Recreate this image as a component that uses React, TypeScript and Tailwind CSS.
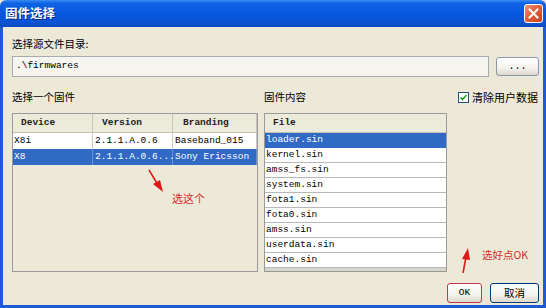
import React from "react";

const cjk = { fontFamily: '"Noto Sans CJK SC", "Noto Sans", sans-serif' };
const mono = { fontFamily: '"Liberation Mono", "DejaVu Sans Mono", monospace' };

const devices = [
  { d: "X8i", v: "2.1.1.A.0.6", b: "Baseband_015", sel: false },
  { d: "X8", v: "2.1.1.A.0.6...", b: "Sony Ericsson", sel: true },
];

const files = [
  "loader.sin",
  "kernel.sin",
  "amss_fs.sin",
  "system.sin",
  "fota1.sin",
  "fota0.sin",
  "amss.sin",
  "userdata.sin",
  "cache.sin",
];

function XpButton({ children, className = "" }: { children: React.ReactNode; className?: string }) {
  return (
    <div
      className={
        "flex items-center justify-center rounded-[3px] border border-[#003c74] bg-[linear-gradient(to_bottom,#ffffff_0%,#f3f2ec_60%,#dcd8cc_100%)] text-[10.5px] text-black " +
        className
      }
    >
      {children}
    </div>
  );
}

export default function App() {
  return (
    <div className="relative flex h-[308px] w-[546px] flex-col overflow-hidden bg-[#ece9d8]">
      {/* Title bar */}
      <div className="flex h-[27px] shrink-0 items-center justify-between rounded-t-[6px] bg-[linear-gradient(to_bottom,#3b8cf5_0%,#0f63e4_12%,#0756dc_55%,#0a52d2_85%,#0a48c0_100%)] pl-[5px] pr-[3px]">
        <span
          className="text-[12.5px] font-bold leading-none text-white [text-shadow:1px_1px_0_#0a2a80]"
          style={cjk}
        >
          固件选择
        </span>
        <div className="flex h-[19px] w-[19px] items-center justify-center rounded-[3px] border border-white bg-[linear-gradient(135deg,#f0967a_0%,#e0603a_45%,#c8401c_100%)]">
          <svg width="11" height="11" viewBox="0 0 11 11">
            <path d="M1.5 1.5 L9.5 9.5 M9.5 1.5 L1.5 9.5" stroke="white" strokeWidth="2" strokeLinecap="square" />
          </svg>
        </div>
      </div>

      {/* Body */}
      <div className="flex flex-1 flex-col border-x-[3px] border-b-[3px] border-[#1f5ad6] pl-[9px] pr-[4px] pt-[10px] pb-[2px]">
        <div className="h-[14px] text-[10.5px] leading-[14px] text-black" style={cjk}>
          选择源文件目录:
        </div>
        <div className="mt-[5px] flex h-[21px] items-center">
          <div
            className="flex h-[21px] w-[477px] items-center border border-[#a5acb2] bg-[#f6f5f0] pl-[3px] text-[9.5px] text-black"
            style={mono}
          >
            .\firmwares
          </div>
          <XpButton className="ml-auto h-[19px] w-[43px] border-[#8a98a8] text-[#6b6b6b]">
            <span style={mono} className="text-[10px]">...</span>
          </XpButton>
        </div>

        <div className="mt-[13px] flex">
          {/* Left column */}
          <div className="flex w-[246px] flex-col">
            <div className="h-[14px] text-[10.5px] leading-[14px] text-black" style={cjk}>
              选择一个固件
            </div>
            <div className="mt-[9px] flex h-[159px] flex-col border border-[#9a9a9a] bg-[#ece9d8]" style={mono}>
              <div className="flex h-[19px] shrink-0 border-b border-[#c5c2b2] bg-[#ebeadb] text-[9.5px] font-bold text-[#222]">
                <div className="flex w-[80px] items-center border-r border-[#c9c6b8] pl-[8px]">Device</div>
                <div className="flex w-[80px] items-center border-r border-[#c9c6b8] pl-[9px]">Version</div>
                <div className="flex flex-1 items-center border-r border-[#c9c6b8] pl-[10px]">Branding</div>
              </div>
              {devices.map((r) => (
                <div
                  key={r.d}
                  className={
                    "flex h-[16px] shrink-0 text-[9.5px] " +
                    (r.sel ? "bg-[#316ac5] text-white" : "bg-white text-black")
                  }
                >
                  <div className={"flex w-[80px] items-center border-r pl-[1px] " + (r.sel ? "border-[#6a8fd0]" : "border-[#c8c8c8]")}>{r.d}</div>
                  <div className={"flex w-[80px] items-center border-r pl-[2px] " + (r.sel ? "border-[#6a8fd0]" : "border-[#c8c8c8]")}>{r.v}</div>
                  <div className={"flex flex-1 items-center border-r pl-[2px] " + (r.sel ? "border-[#6a8fd0]" : "border-[#c8c8c8]")}>{r.b}</div>
                </div>
              ))}
            </div>
          </div>

          {/* Middle column */}
          <div className="ml-[6px] flex w-[183px] flex-col">
            <div className="h-[14px] text-[10.5px] leading-[14px] text-black" style={cjk}>
              固件内容
            </div>
            <div className="mt-[9px] flex h-[159px] flex-col border border-[#9a9a9a] bg-[#d8d6ca]" style={mono}>
              <div className="flex h-[19px] shrink-0 items-center border-b border-[#c5c2b2] bg-[#ebeadb] pl-[8px] text-[9.5px] font-bold text-[#222]">
                File
              </div>
              {files.map((f, i) => (
                <div
                  key={f}
                  className={
                    "flex h-[15px] shrink-0 items-center border-b pl-[1px] text-[9.5px] " +
                    (i === 0 ? "border-[#316ac5] bg-[#316ac5] text-white" : "border-[#b8b8b8] bg-white text-black")
                  }
                >
                  {f}
                </div>
              ))}
            </div>
          </div>

          {/* Right column */}
          <div className="ml-[11px] flex h-[14px] items-center">
            <div className="flex h-[11px] w-[11px] items-center justify-center border border-[#1c5180] bg-white">
              <svg width="9" height="9" viewBox="0 0 9 9">
                <path d="M1.5 4.5 L3.6 6.6 L7.5 2" fill="none" stroke="#21a121" strokeWidth="1.6" />
              </svg>
            </div>
            <span className="ml-[3px] text-[11px] leading-[14px] text-black" style={cjk}>
              清除用户数据
            </span>
          </div>
        </div>

        <div className="mt-[11px] flex justify-end gap-[8px]">
          <XpButton className="h-[20px] w-[35px] border-[1.5px] border-[#c8364d]">
            <span style={mono} className="text-[9.5px]">OK</span>
          </XpButton>
          <XpButton className="h-[20px] w-[49px]">
            <span style={cjk}>取消</span>
          </XpButton>
        </div>
      </div>

      {/* Annotations */}
      <svg className="pointer-events-none absolute left-0 top-0" width="546" height="308">
        <line x1="149" y1="170" x2="158" y2="185" stroke="#e01818" strokeWidth="1.5" />
        <polygon points="163,192 153,184 160,180" fill="#e01818" />
        <line x1="463" y1="273" x2="466" y2="257" stroke="#e01818" strokeWidth="1.5" />
        <polygon points="468,248 462,259 470,260" fill="#e01818" />
      </svg>
      <span className="absolute left-[172px] top-[191px] text-[11px] leading-[14px] text-[#d82a2a]" style={cjk}>
        选这个
      </span>
      <span className="absolute left-[482px] top-[248px] text-[10.5px] leading-[14px] text-[#d82a2a]" style={cjk}>
        选好点OK
      </span>
    </div>
  );
}
